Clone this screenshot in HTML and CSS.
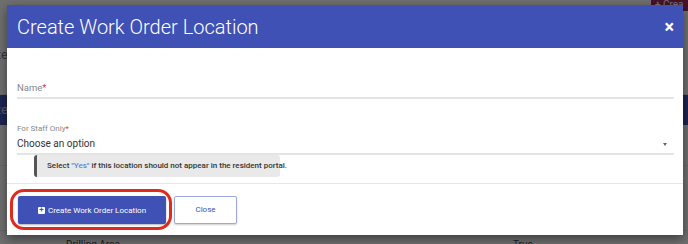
FILE: index.html
```html
<!DOCTYPE html>
<html lang="en">
<head>
  <meta charset="UTF-8" />
  <title>Create Work Order Location</title>
  <link rel="stylesheet" href="styles.css">
</head>
<body>

  <div class="page">
    <div class="topbar">
      <span class="top-btn"><span class="top-plus">+</span> Crea</span>
    </div>
    <div class="page-row">Create</div>
    <div class="band">Create</div>
    <div class="page-row short"></div>
    <div class="page-row tall"></div>
    <div class="page-foot">
      <span>Drilling Area</span>
      <span>True</span>
    </div>
  </div>

  <div class="overlay"></div>

  <div class="modal">
    <div class="modal-head">
      <h1>Create Work Order Location</h1>
      <span class="close-x">&times;</span>
    </div>

    <div class="modal-body">
      <div class="field">
        <label class="field-label">Name<span class="req">*</span></label>
      </div>

      <div class="field select-field">
        <label class="small-label">For Staff Only<span class="req">*</span></label>
        <div class="select">
          <span>Choose an option</span>
          <span class="caret"></span>
        </div>
      </div>

      <div class="hint">
        Select <span class="yes">"Yes"</span> if this location should not appear in the resident portal.
      </div>
    </div>

    <div class="modal-foot">
      <div class="highlight">
        <button class="btn-primary"><span class="plus-box">+</span>Create Work Order Location</button>
      </div>
      <button class="btn-close">Close</button>
    </div>
  </div>

</body>
</html>
```

FILE: styles.css
```css
body {
  margin: 0;
  width: 688px;
  height: 244px;
  overflow: hidden;
  position: relative;
  font-family: Roboto, 'Noto Sans', sans-serif;
  background: #fff;
}

/* page behind the dialog */
.page {
  height: 244px;
  background: #f7f7f7;
  color: #333;
  font-size: 11px;
}
.topbar {
  height: 40px;
  display: flex;
  justify-content: flex-end;
  align-items: flex-start;
}
.top-btn {
  background: #a0265d;
  color: #fff;
  padding: 0 4px;
  height: 11px;
  line-height: 9px;
  font-size: 10px;
  width: 29px;
  white-space: nowrap;
  overflow: hidden;
}
.top-plus {
  font-weight: 700;
}
.page-row {
  height: 54px;
  border-bottom: 1px solid #e2e2e2;
  line-height: 30px;
  font-size: 13px;
  color: #777;
  margin-left: -30px;
}
.page-row.short {
  height: 40px;
}
.page-row.tall {
  height: 64px;
}
.band {
  height: 30px;
  background: #3f51b5;
  color: #c8cde8;
  line-height: 30px;
  font-size: 13px;
  margin-left: -30px;
}
.page-foot {
  display: grid;
  grid-template-columns: 447px auto;
  padding: 8px 0 0 66px;
  font-size: 10px;
  color: #444;
}

.overlay {
  position: absolute;
  inset: 0;
  background: rgba(0, 0, 0, 0.55);
}

/* dialog */
.modal {
  position: absolute;
  left: 7px;
  top: 5px;
  width: 676px;
  height: 230px;
  background: #fff;
  box-shadow: 0 4px 10px rgba(0,0,0,0.45);
  display: flex;
  flex-direction: column;
}
.modal-head {
  height: 43px;
  background: #3f51b5;
  color: #fff;
  display: flex;
  align-items: center;
  justify-content: space-between;
  padding: 0 10px;
}
.modal-head h1 {
  margin: 0;
  font-size: 20px;
  font-weight: 300;
}
.close-x {
  font-size: 18px;
  font-weight: 700;
  line-height: 1;
  margin-right: -1px;
}

.modal-body {
  padding: 34px 9px 6px 10px;
  border-bottom: 1px solid #e6e6e6;
}
.field-label {
  display: block;
  font-size: 9.5px;
  color: #888;
  line-height: 12px;
  padding-bottom: 3px;
  border-bottom: 2px solid #e4e4e4;
}
.req {
  color: #e53935;
}
.select-field {
  margin-top: 25px;
}
.small-label {
  display: block;
  font-size: 8px;
  color: #888;
  line-height: 10px;
}
.select {
  display: flex;
  justify-content: space-between;
  align-items: center;
  margin-top: 3px;
  font-size: 10px;
  color: #333;
  line-height: 14px;
  padding-bottom: 2px;
  border-bottom: 2px solid #e4e4e4;
}
.caret {
  width: 0;
  height: 0;
  border-left: 2.5px solid transparent;
  border-right: 2.5px solid transparent;
  border-top: 3px solid #666;
  margin-right: 7px;
}
.hint {
  margin-left: 17px;
  width: 246px;
  height: 22px;
  background: #e9e9e9;
  border-left: 3px solid #555;
  border-radius: 3px;
  font-size: 8px;
  font-weight: 500;
  color: #333;
  line-height: 22px;
  padding-left: 10px;
  box-sizing: border-box;
  white-space: nowrap;
}
.yes {
  color: #4a89f0;
}

.modal-foot {
  display: flex;
  align-items: center;
  padding: 5px 0 0 3px;
  gap: 2px;
}
.highlight {
  border: 3px solid #e02a1c;
  border-radius: 14px;
  padding: 4px 3px 3px 5px;
}
button {
  font-family: Roboto, 'Noto Sans', sans-serif;
  cursor: pointer;
}
.btn-primary {
  display: flex;
  align-items: center;
  justify-content: center;
  gap: 3px;
  width: 148px;
  height: 28px;
  background: #3f51b5;
  color: #fff;
  border: none;
  border-radius: 2px;
  font-size: 8px;
  box-shadow: 0 1px 2px rgba(0,0,0,0.3);
}
.plus-box {
  display: inline-flex;
  align-items: center;
  justify-content: center;
  width: 7px;
  height: 7px;
  background: #fff;
  color: #3f51b5;
  font-size: 8px;
  font-weight: 700;
  line-height: 1;
  border-radius: 1px;
}
.btn-close {
  width: 63px;
  height: 28px;
  background: #fff;
  color: #3f51b5;
  border: 1px solid #9fa8da;
  border-radius: 2px;
  font-size: 8px;
  box-shadow: 0 1px 2px rgba(0,0,0,0.2);
}
```
